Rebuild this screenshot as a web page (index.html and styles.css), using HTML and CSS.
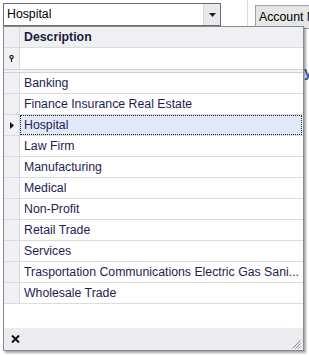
FILE: index.html
```html
<!DOCTYPE html>
<html lang="en">
<head>
<meta charset="UTF-8">
<title>Industry Lookup</title>
<link rel="stylesheet" href="styles.css">
</head>
<body>

<div class="toolbar">
  <div class="combo">
    <span class="combo-text">Hospital</span>
    <span class="combo-btn">
      <svg width="7" height="4" viewBox="0 0 7 4"><path d="M0 0H7L3.5 4Z" fill="#222"/></svg>
    </span>
  </div>
  <div class="sep"></div>
  <div class="account-btn">Account Number</div>
</div>

<div class="under-text">y</div>

<div class="popup">
  <div class="row head">
    <div class="ind"></div>
    <div class="cell">Description</div>
  </div>
  <div class="row filter">
    <div class="ind">
      <svg width="5" height="7" viewBox="0 0 5 7"><circle cx="2.5" cy="2" r="1.6" fill="none" stroke="#222" stroke-width="1.2"/><path d="M2.5 3.5V7" stroke="#222" stroke-width="1.2"/></svg>
    </div>
    <div class="cell"></div>
  </div>
  <div class="divider"></div>

  <div class="row"><div class="ind"></div><div class="cell">Banking</div></div>
  <div class="row"><div class="ind"></div><div class="cell">Finance Insurance Real Estate</div></div>
  <div class="row current">
    <div class="ind">
      <svg width="4" height="7" viewBox="0 0 4 7"><path d="M0 0L4 3.5L0 7Z" fill="#111"/></svg>
    </div>
    <div class="cell">Hospital</div>
  </div>
  <div class="row"><div class="ind"></div><div class="cell">Law Firm</div></div>
  <div class="row"><div class="ind"></div><div class="cell">Manufacturing</div></div>
  <div class="row"><div class="ind"></div><div class="cell">Medical</div></div>
  <div class="row"><div class="ind"></div><div class="cell">Non-Profit</div></div>
  <div class="row"><div class="ind"></div><div class="cell">Retail Trade</div></div>
  <div class="row"><div class="ind"></div><div class="cell">Services</div></div>
  <div class="row"><div class="ind"></div><div class="cell">Trasportation Communications Electric Gas Sani...</div></div>
  <div class="row"><div class="ind"></div><div class="cell">Wholesale Trade</div></div>

  <div class="blank"></div>

  <div class="footer">
    <svg class="close" width="9" height="8" viewBox="0 0 9 8"><path d="M1 0.5L8 7.5M8 0.5L1 7.5" stroke="#111" stroke-width="2"/></svg>
    <svg class="grip" width="10" height="10" viewBox="0 0 10 10"><path d="M9.5 1.5L1.5 9.5M9.5 4.5L4.5 9.5M9.5 7.5L7.5 9.5" stroke="#8a8a8a" stroke-width="1"/></svg>
  </div>
</div>

</body>
</html>
```

FILE: styles.css
```css
body {
  margin: 0;
  background: #fff;
  font-family: "Liberation Sans", Arial, sans-serif;
  font-size: 12.3px;
  color: #000;
  overflow: hidden;
  width: 309px;
  height: 356px;
  position: relative;
}

.toolbar {
  display: flex;
  align-items: flex-start;
  padding: 3px 0 0 3px;
  height: 26px;
}

.combo {
  display: flex;
  flex: none;
  width: 216px;
  height: 21px;
  border: 1px solid #6e6e6e;
  background: #fff;
}

.combo-text {
  flex: 1;
  padding-left: 3px;
  line-height: 21px;
}

.combo-btn {
  width: 16px;
  background: #e8e9ec;
  border-left: 1px solid #d4d6da;
  display: flex;
  align-items: center;
  justify-content: center;
}

.sep {
  flex: none;
  width: 1px;
  height: 26px;
  margin: -3px 0 0 26px;
  background: #dadada;
}

.account-btn {
  flex: none;
  margin: 2px 0 0 7px;
  height: 22px;
  padding-left: 3px;
  line-height: 22px;
  white-space: nowrap;
  background: #e6e6e6;
  border: 1px solid #a0a0a0;
}

.under-text {
  position: absolute;
  left: 304px;
  top: 64px;
  color: #3858a8;
  font-weight: bold;
  font-size: 14px;
}

.popup {
  position: absolute;
  left: 3px;
  top: 26px;
  width: 299px;
  height: 323px;
  border: 1px solid #8a8a8a;
  background: #fff;
  display: flex;
  flex-direction: column;
  box-shadow: 2px 2px 2px rgba(0, 0, 0, 0.35);
}

.row {
  display: flex;
  height: 20px;
  border-bottom: 1px solid #dcdcdc;
  color: #1e1e50;
  flex: none;
}

.ind {
  width: 15px;
  background: #f0f1f4;
  border-right: 1px solid #d6d8dc;
  display: flex;
  align-items: center;
  justify-content: center;
}

.cell {
  flex: 1;
  min-width: 0;
  padding-left: 4px;
  line-height: 20px;
  white-space: nowrap;
  overflow: hidden;
}

.head {
  background: #eef0f3;
  font-weight: bold;
  color: #1a1a3a;
}

.head .ind {
  background: #eef0f3;
}

.filter {
  height: 21px;
  border-bottom: none;
}

.divider {
  height: 2px;
  border-top: 1px solid #d0d2d6;
  border-bottom: 1px solid #d0d2d6;
  background: #f2f2f2;
  flex: none;
}

.current .cell {
  background: #e2eafa;
  outline: 1px dotted #222;
  outline-offset: -1px;
  margin-right: 1px;
}

.blank {
  flex: 1;
}

.footer {
  height: 22px;
  background: #eaecf0;
  display: flex;
  align-items: center;
  justify-content: space-between;
  padding: 0 2px 0 7px;
  flex: none;
}

.grip {
  align-self: flex-end;
  margin-bottom: 1px;
}
```
